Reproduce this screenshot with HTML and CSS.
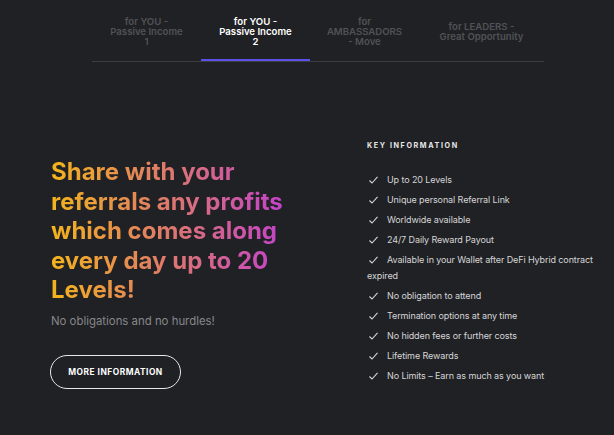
FILE: index.html
```html
<!DOCTYPE html>
<html lang="en">
<head>
    <meta charset="UTF-8">
    <meta name="viewport" content="width=device-width, initial-scale=1.0">
    <title>Referral Program</title>
    <link rel="stylesheet" href="styles.css">
</head>
<body>

    <!-- tabs -->
    <div class="tabs">
        <div class="tab">for YOU -<br>Passive Income<br>1</div>
        <div class="tab active">for YOU -<br>Passive Income<br>2</div>
        <div class="tab">for<br>AMBASSADORS<br>- Move</div>
        <div class="tab wide">for LEADERS -<br>Great Opportunity</div>
    </div>

    <div class="main">
        <!-- left column -->
        <div class="intro">
            <h1 class="headline">Share with your referrals any profits which comes along every day up to 20 Levels!</h1>
            <p class="subline">No obligations and no hurdles!</p>
            <button class="more-button">MORE INFORMATION</button>
        </div>

        <!-- right column -->
        <div class="key-info">
            <h3>KEY INFORMATION</h3>
            <ul>
                <li><svg class="check" viewBox="0 0 9 8"><polyline points="0.5,4.5 3,7 8.5,0.8"/></svg>Up to 20 Levels</li>
                <li><svg class="check" viewBox="0 0 9 8"><polyline points="0.5,4.5 3,7 8.5,0.8"/></svg>Unique personal Referral Link</li>
                <li><svg class="check" viewBox="0 0 9 8"><polyline points="0.5,4.5 3,7 8.5,0.8"/></svg>Worldwide available</li>
                <li><svg class="check" viewBox="0 0 9 8"><polyline points="0.5,4.5 3,7 8.5,0.8"/></svg>24/7 Daily Reward Payout</li>
                <li><svg class="check" viewBox="0 0 9 8"><polyline points="0.5,4.5 3,7 8.5,0.8"/></svg>Available in your Wallet after DeFi Hybrid contract expired</li>
                <li><svg class="check" viewBox="0 0 9 8"><polyline points="0.5,4.5 3,7 8.5,0.8"/></svg>No obligation to attend</li>
                <li><svg class="check" viewBox="0 0 9 8"><polyline points="0.5,4.5 3,7 8.5,0.8"/></svg>Termination options at any time</li>
                <li><svg class="check" viewBox="0 0 9 8"><polyline points="0.5,4.5 3,7 8.5,0.8"/></svg>No hidden fees or further costs</li>
                <li><svg class="check" viewBox="0 0 9 8"><polyline points="0.5,4.5 3,7 8.5,0.8"/></svg>Lifetime Rewards</li>
                <li><svg class="check" viewBox="0 0 9 8"><polyline points="0.5,4.5 3,7 8.5,0.8"/></svg>No Limits – Earn as much as you want</li>
            </ul>
        </div>
    </div>

</body>
</html>
```

FILE: styles.css
```css
* {
    margin: 0;
    padding: 0;
    box-sizing: border-box;
}

body {
    font-family: Inter, "Noto Sans", sans-serif;
    background-color: #202124;
    height: 100vh;
    overflow: hidden;
}

.tabs {
    display: flex;
    width: 452px;
    margin-left: 92px;
    border-bottom: 1px solid #3c3d40;
}

.tab {
    width: 109px;
    height: 61px;
    padding-top: 17px;
    text-align: center;
    font-size: 9.6px;
    font-weight: 600;
    line-height: 10px;
    color: #505256;
}

.tab.wide {
    width: 125px;
    padding-top: 22px;
}

.tab.active {
    color: #ffffff;
    border-bottom: 2px solid #5d50e6;
    margin-bottom: -1px;
}

.main {
    display: flex;
    padding-left: 51px;
}

.intro {
    width: 316px;
    padding-top: 95px;
}

.headline {
    width: 250px;
    font-size: 24px;
    font-weight: 700;
    line-height: 29.5px;
    background: linear-gradient(90deg, #f4b41c 0%, #e07d66 45%, #c23fd0 100%);
    background-size: 240px 100%;
    background-repeat: no-repeat;
    -webkit-background-clip: text;
    background-clip: text;
    color: transparent;
}

.subline {
    margin-top: 8px;
    font-size: 11.4px;
    line-height: 16px;
    color: #86878b;
}

.more-button {
    margin-top: 26px;
    margin-left: -1px;
    width: 131px;
    height: 34px;
    background-color: transparent;
    border: 1.5px solid #e8e8e8;
    border-radius: 17px;
    color: #ffffff;
    font-family: inherit;
    font-size: 8.4px;
    font-weight: 700;
    letter-spacing: 0.5px;
    cursor: pointer;
}

.key-info {
    width: 240px;
    padding-top: 79px;
}

.key-info h3 {
    font-size: 7.2px;
    font-weight: 700;
    line-height: 10px;
    letter-spacing: 1.6px;
    color: #e8e8e8;
    margin-bottom: 21px;
}

.key-info ul {
    list-style-type: none;
}

.key-info li {
    font-size: 9px;
    line-height: 16px;
    letter-spacing: -0.1px;
    color: #d6d6d8;
    margin-bottom: 4px;
}

.check {
    width: 9px;
    height: 8px;
    margin: 0 9px 0 2px;
    vertical-align: -1px;
    fill: none;
    stroke: #d6d6d8;
    stroke-width: 1.1;
}
```
